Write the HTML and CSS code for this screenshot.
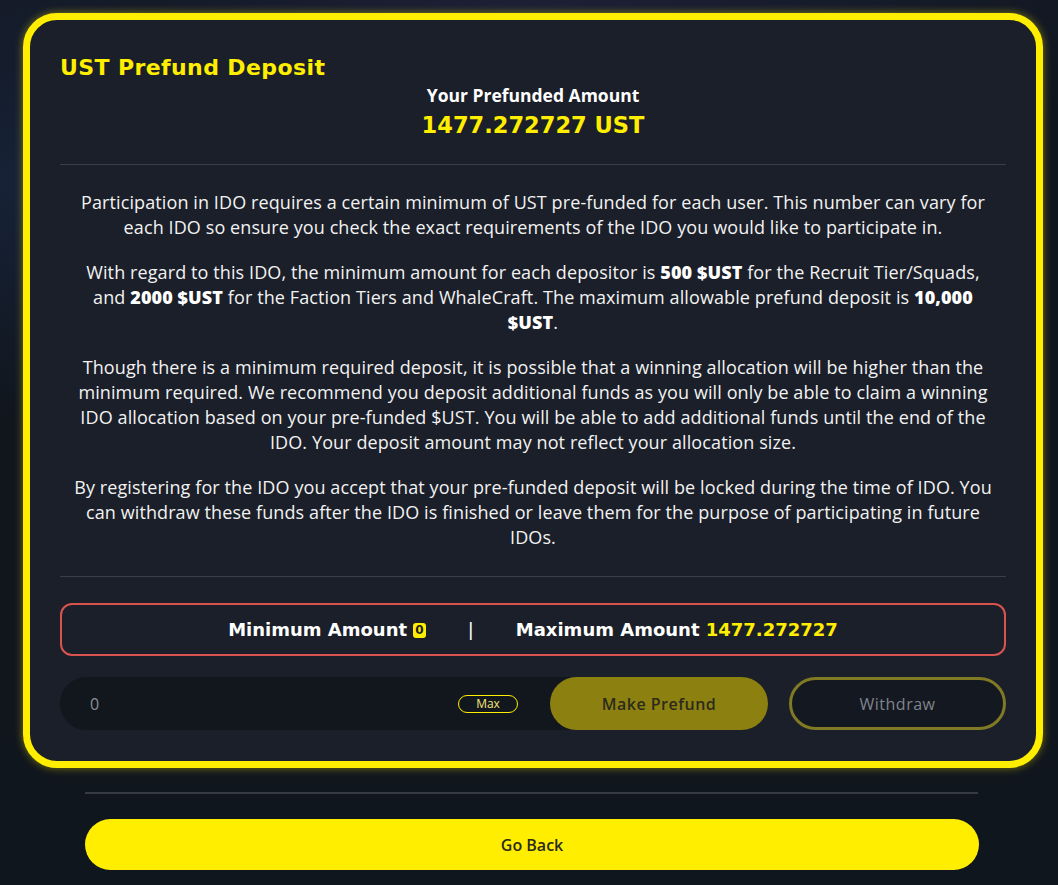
FILE: index.html
```html
<!DOCTYPE html>
<html lang="en">
<head>
    <meta charset="UTF-8">
    <meta name="viewport" content="width=device-width, initial-scale=1.0">
    <title>UST Prefund Deposit</title>
    <link rel="stylesheet" href="styles.css">
</head>
<body>

    <div class="page">

        <!-- 存款卡片 -->
        <div class="card">
            <h2 class="title">UST Prefund Deposit</h2>

            <div class="amount">
                <div class="amount-label">Your Prefunded Amount</div>
                <div class="amount-value">1477.272727 UST</div>
            </div>

            <div class="line"></div>

            <div class="info">
                <p>Participation in IDO requires a certain minimum of UST pre-funded for each user. This number can vary for each IDO so ensure you check the exact requirements of the IDO you would like to participate in.</p>
                <p>With regard to this IDO, the minimum amount for each depositor is <b>500 $UST</b> for the Recruit Tier/Squads, and <b>2000 $UST</b> for the Faction Tiers and WhaleCraft. The maximum allowable prefund deposit is <b>10,000 $UST</b>.</p>
                <p>Though there is a minimum required deposit, it is possible that a winning allocation will be higher than the minimum required. We recommend you deposit additional funds as you will only be able to claim a winning IDO allocation based on your pre-funded $UST. You will be able to add additional funds until the end of the IDO. Your deposit amount may not reflect your allocation size.</p>
                <p>By registering for the IDO you accept that your pre-funded deposit will be locked during the time of IDO. You can withdraw these funds after the IDO is finished or leave them for the purpose of participating in future IDOs.</p>
            </div>

            <div class="line"></div>

            <div class="limits">
                <span>Minimum Amount <em class="zero">0</em></span>
                <span class="sep">|</span>
                <span>Maximum Amount <em>1477.272727</em></span>
            </div>

            <div class="actions">
                <div class="input-group">
                    <input class="input" type="text" placeholder="0">
                    <span class="max">Max</span>
                    <button class="btn-prefund">Make Prefund</button>
                </div>
                <button class="btn-withdraw">Withdraw</button>
            </div>
        </div>

        <div class="bottom-line"></div>

        <button class="btn-back">Go Back</button>

    </div>

</body>
</html>
```

FILE: styles.css
```css
/*初始化*/
html, body {
    margin: 0;
    padding: 0;
}

body {
    background-color: #10161d;
    background-image:
        radial-gradient(ellipse 700px 160px at 50% 0, #1b2036 0%, rgba(16, 22, 29, 0) 100%),
        radial-gradient(ellipse 220px 240px at 0 180px, #172238 0%, rgba(16, 22, 29, 0) 100%);
    background-repeat: no-repeat;
    font-family: "Open Sans", "Liberation Sans", sans-serif;
    color: #fff;
    min-height: 885px;
}

.page {
    padding: 13px 15px 0 23px;
}

/*1.卡片外框*/
.card {
    border: 7px solid #ffee00;
    border-radius: 34px;
    background-color: #1b1f29;
    box-shadow: 0 0 8px rgba(255, 238, 0, 0.45);
    padding: 34px 30px 31px 30px;
}

.title {
    margin: 0;
    font-family: "DejaVu Sans", sans-serif;
    font-size: 22px;
    line-height: 28px;
    font-weight: bold;
    color: #ffee00;
    letter-spacing: 0.4px;
}

/*2.已存金额*/
.amount {
    text-align: center;
    margin-top: 2px;
}

.amount-label {
    font-size: 17.5px;
    line-height: 22px;
    font-weight: bold;
}

.amount-value {
    margin-top: 4px;
    font-family: "DejaVu Sans", sans-serif;
    font-size: 22.5px;
    line-height: 30px;
    font-weight: bold;
    color: #ffee00;
}

.line {
    height: 1px;
    background-color: #3a3e49;
    margin-top: 24px;
}

/*3.说明文字*/
.info {
    padding: 25px 9px 1px;
    text-align: center;
    font-size: 18px;
    line-height: 25px;
    letter-spacing: 0.1px;
    color: #f2f2f2;
}

.info p {
    margin: 0 0 20px;
}

.info p:last-child {
    margin-bottom: 0;
}

.info b {
    font-weight: 800;
    color: #fff;
}

.info + .line {
    margin-top: 25px;
}

/*4.最小最大金额*/
.limits {
    margin-top: 26px;
    height: 49px;
    border: 2px solid #d9534f;
    border-radius: 12px;
    display: flex;
    justify-content: center;
    align-items: center;
    gap: 42px;
    font-family: "DejaVu Sans", sans-serif;
    font-size: 18px;
    font-weight: bold;
    color: #fff;
}

.limits em {
    font-style: normal;
    color: #ffee00;
}

.limits .zero {
    display: inline-block;
    background-color: #ffee00;
    color: #1b1f29;
    font-size: 12px;
    line-height: 15px;
    padding: 0 2px;
    border-radius: 3px;
    vertical-align: 2px;
}

.limits .sep {
    font-weight: normal;
}

/*5.输入框和按钮*/
.actions {
    margin-top: 21px;
    display: flex;
    gap: 21px;
}

.input-group {
    flex: 1;
    height: 53px;
    background-color: #12161d;
    border-radius: 27px;
    display: flex;
    align-items: center;
}

.input {
    flex: 1;
    min-width: 0;
    height: 100%;
    border: none;
    outline: none;
    background: transparent;
    padding: 0 0 0 30px;
    font-family: "Open Sans", sans-serif;
    font-size: 16px;
    color: #ddd;
}

.input::placeholder {
    color: #8a8f99;
}

.max {
    width: 58px;
    height: 16px;
    border: 1px solid #ffee00;
    border-radius: 10px;
    text-align: center;
    font-size: 12px;
    line-height: 16px;
    color: #f3e87a;
    margin-right: 32px;
}

.btn-prefund,
.btn-withdraw {
    width: 218px;
    height: 53px;
    border-radius: 27px;
    font-family: "Open Sans", sans-serif;
    font-size: 16px;
    font-weight: 600;
    letter-spacing: 0.5px;
    cursor: pointer;
}

.btn-prefund {
    border: none;
    background-color: #8c8110;
    color: #2c2b1c;
}

.btn-withdraw {
    width: 217px;
    border: 3px solid #817a25;
    background-color: #141820;
    color: #80848d;
    font-weight: 500;
}

/*6.返回按钮*/
.bottom-line {
    height: 2px;
    background-color: #363a45;
    margin: 24px 65px 0 62px;
}

.btn-back {
    display: block;
    width: 894px;
    height: 51px;
    margin: 25px 0 0 62px;
    border: none;
    border-radius: 26px;
    background-color: #ffee00;
    font-family: "Open Sans", sans-serif;
    font-size: 16px;
    font-weight: 600;
    color: #2a2a1a;
    cursor: pointer;
}
```
